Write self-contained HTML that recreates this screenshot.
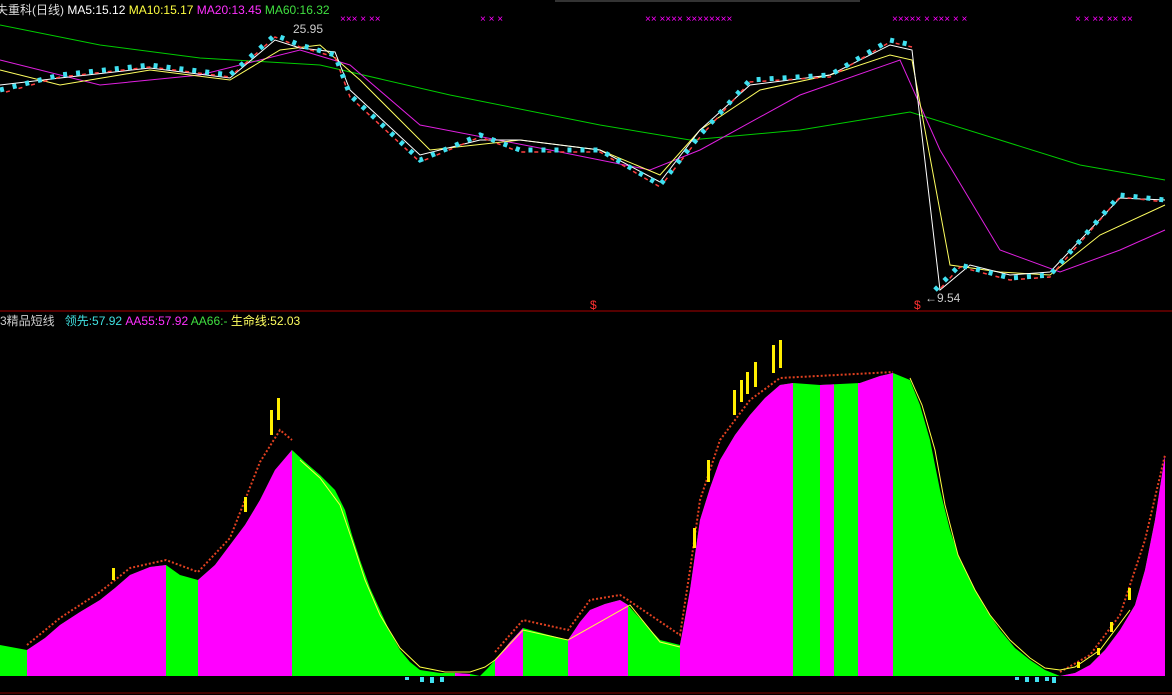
<!DOCTYPE html><html><head><meta charset="utf-8"><style>
body{margin:0;background:#000;width:1172px;height:695px;overflow:hidden;font-family:"Liberation Sans","Noto Sans CJK SC",sans-serif}
.t{position:absolute;font-size:12px;white-space:nowrap}
</style></head><body>
<svg width="1172" height="695" style="position:absolute;left:0;top:0">
<defs><clipPath id="c"><polygon points="0,645 27,650 45,638 60,625 80,612 100,600 115,588 130,575 150,567 166,565 180,575 198,580 215,565 230,545 245,525 260,500 275,470 292,450 305,462 320,475 335,490 345,510 352,535 360,560 370,588 380,610 390,632 400,650 410,662 420,670 440,673 455,673 470,674 480,676 488,668 495,660 510,642 523,628 545,634 568,640 580,622 590,610 605,604 620,600 628,605 645,624 660,640 680,645 685,618 690,590 695,555 700,520 710,488 720,460 735,435 750,415 765,398 780,385 793,383 820,385 860,383 880,376 893,373 910,380 920,405 930,440 940,490 950,530 960,560 970,580 985,608 1000,630 1015,648 1030,660 1045,670 1060,676 1075,673 1090,665 1105,650 1120,630 1135,605 1145,570 1155,520 1165,455 1165,676 0,676"/></clipPath></defs>
<line x1="0" y1="311" x2="1172" y2="311" stroke="#a00" stroke-width="1"/>
<line x1="0" y1="693" x2="1172" y2="693" stroke="#800" stroke-width="1"/>
<line x1="555" y1="1" x2="860" y2="1" stroke="#666"/>
<g clip-path="url(#c)">
<rect x="0" y="300" width="1172" height="376" fill="#00ff00"/>
<g fill="#ff00ff">
<rect x="27" y="300" width="139" height="376"/><rect x="198" y="300" width="94" height="376"/>
<rect x="455" y="300" width="15" height="376"/><rect x="495" y="300" width="28" height="376"/>
<rect x="568" y="300" width="60" height="376"/><rect x="680" y="300" width="113" height="376"/>
<rect x="820" y="300" width="14" height="376"/><rect x="858" y="300" width="35" height="376"/>
<rect x="1060" y="300" width="110" height="376"/></g></g>
<polyline fill="none" stroke="#e04020" stroke-width="2" stroke-dasharray="2 2" points="27,645 60,618 100,592 130,568 166,560 198,572 230,538 260,462 280,430 292,440"/>
<polyline fill="none" stroke="#e04020" stroke-width="2" stroke-dasharray="2 2" points="495,652 523,620 568,630 590,600 620,595 628,600 680,635 690,570 700,500 720,440 750,400 780,378 893,372"/>
<polyline fill="none" stroke="#e04020" stroke-width="2" stroke-dasharray="2 2" points="1060,672 1090,655 1120,615 1145,540 1165,455"/>
<polyline fill="none" stroke="#ffff40" stroke-width="1" points="300,460 320,478 340,505 352,540 365,580 380,615 400,648 420,667 445,672 470,672 485,667 495,660 523,630 568,640 630,605 660,642 680,647"/>
<polyline fill="none" stroke="#ffff40" stroke-width="1" points="910,378 922,405 935,450 945,505 958,555 975,590 990,615 1010,640 1030,658 1045,668 1060,670 1075,667 1100,650 1130,610"/>
<g fill="#ffee00"><rect x="112" y="568" width="3" height="12"/><rect x="244" y="497" width="3" height="15"/><rect x="270" y="410" width="3" height="25"/><rect x="277" y="398" width="3" height="22"/><rect x="693" y="528" width="3" height="20"/><rect x="707" y="460" width="3" height="22"/><rect x="733" y="390" width="3" height="25"/><rect x="740" y="380" width="3" height="22"/><rect x="746" y="372" width="3" height="22"/><rect x="754" y="362" width="3" height="25"/><rect x="772" y="345" width="3" height="28"/><rect x="779" y="340" width="3" height="28"/><rect x="1077" y="662" width="3" height="6"/><rect x="1097" y="648" width="3" height="7"/><rect x="1110" y="622" width="3" height="10"/><rect x="1128" y="588" width="3" height="12"/></g>
<g fill="#40e0f0"><rect x="405" y="677" width="4" height="3"/><rect x="420" y="677" width="4" height="5"/><rect x="430" y="677" width="4" height="6"/><rect x="440" y="677" width="4" height="5"/><rect x="1015" y="677" width="4" height="3"/><rect x="1025" y="677" width="4" height="5"/><rect x="1035" y="677" width="4" height="5"/><rect x="1045" y="677" width="4" height="4"/><rect x="1052" y="677" width="4" height="6"/></g>
<polyline fill="none" stroke="#00cc00" stroke-width="1" points="0,25 100,45 200,58 320,65 450,95 600,125 690,140 800,130 910,112 1000,140 1080,165 1165,180"/>
<polyline fill="none" stroke="#e020e0" stroke-width="1" points="0,60 100,85 200,75 300,50 350,65 420,125 550,150 650,170 700,150 800,95 900,60 940,150 1000,250 1060,272 1120,250 1165,230"/>
<polyline fill="none" stroke="#ffff60" stroke-width="1" points="0,70 60,85 150,70 230,80 280,50 320,45 360,80 430,150 520,140 600,150 660,175 700,130 760,90 830,75 890,55 912,60 950,265 1000,272 1050,275 1100,235 1165,205"/>
<polyline fill="none" stroke="#fff" stroke-width="1" points="0,85 60,78 150,68 230,78 275,40 300,48 335,52 350,90 420,155 480,140 520,140 600,150 660,182 700,130 750,85 830,75 890,45 912,50 940,290 970,265 1010,275 1050,272 1120,198 1165,200"/>
<path fill="none" stroke="#40e0f0" stroke-width="5" stroke-dasharray="4 9" d="M0,90 L60,75 150,65 230,75 275,35 300,45 335,55 350,95 420,160 480,135 520,150 600,150 660,185 700,135 750,80 830,75 890,40 912,45 M935,290 L960,265 1010,278 1050,275 1120,195 1165,200"/>
<path fill="none" stroke="#ff4040" stroke-width="1.5" stroke-dasharray="4 9" d="M6,92 L60,77 150,67 230,77 275,37 300,47 335,57 350,97 420,162 480,137 520,152 600,152 660,187 700,137 750,82 830,77 890,42 912,47 M941,288 L960,267 1010,280 1050,277 1120,197 1165,202"/>
<text x="340" y="22" fill="#ff00ff" font-size="10" font-family="Liberation Sans">×××  ×  ××</text>
<text x="480" y="22" fill="#ff00ff" font-size="10" font-family="Liberation Sans">×  ×  ×</text>
<text x="645" y="22" fill="#ff00ff" font-size="10" font-family="Liberation Sans">×× ××××  ××××××××</text>
<text x="892" y="22" fill="#ff00ff" font-size="10" font-family="Liberation Sans">××××× ×  ××× ×  ×</text>
<text x="1075" y="22" fill="#ff00ff" font-size="10" font-family="Liberation Sans">×  × ×× ×× ××</text>
<text x="590" y="309" fill="#ff3030" font-size="12" font-family="Liberation Sans">$</text>
<text x="914" y="309" fill="#ff3030" font-size="12" font-family="Liberation Sans">$</text>
<text x="293" y="33" fill="#ccc" font-size="12" font-family="Liberation Sans">25.95</text>
<text x="925" y="302" fill="#ccc" font-size="12" font-family="Liberation Sans">←9.54</text>
</svg>
<div class="t" style="left:-4px;top:1px;color:#ddd">失重科(日线) <span style="color:#fff">MA5:15.12</span> <span style="color:#ffff40">MA10:15.17</span> <span style="color:#ff30ff">MA20:13.45</span> <span style="color:#40e040">MA60:16.32</span></div>
<div class="t" style="left:0;top:312px;color:#ccc">3精品短线 &nbsp; <span style="color:#40e0e0">领先:57.92</span> <span style="color:#ff30ff">AA55:57.92</span> <span style="color:#40e040">AA66:-</span> <span style="color:#ffff60">生命线:52.03</span></div>
</body></html>
